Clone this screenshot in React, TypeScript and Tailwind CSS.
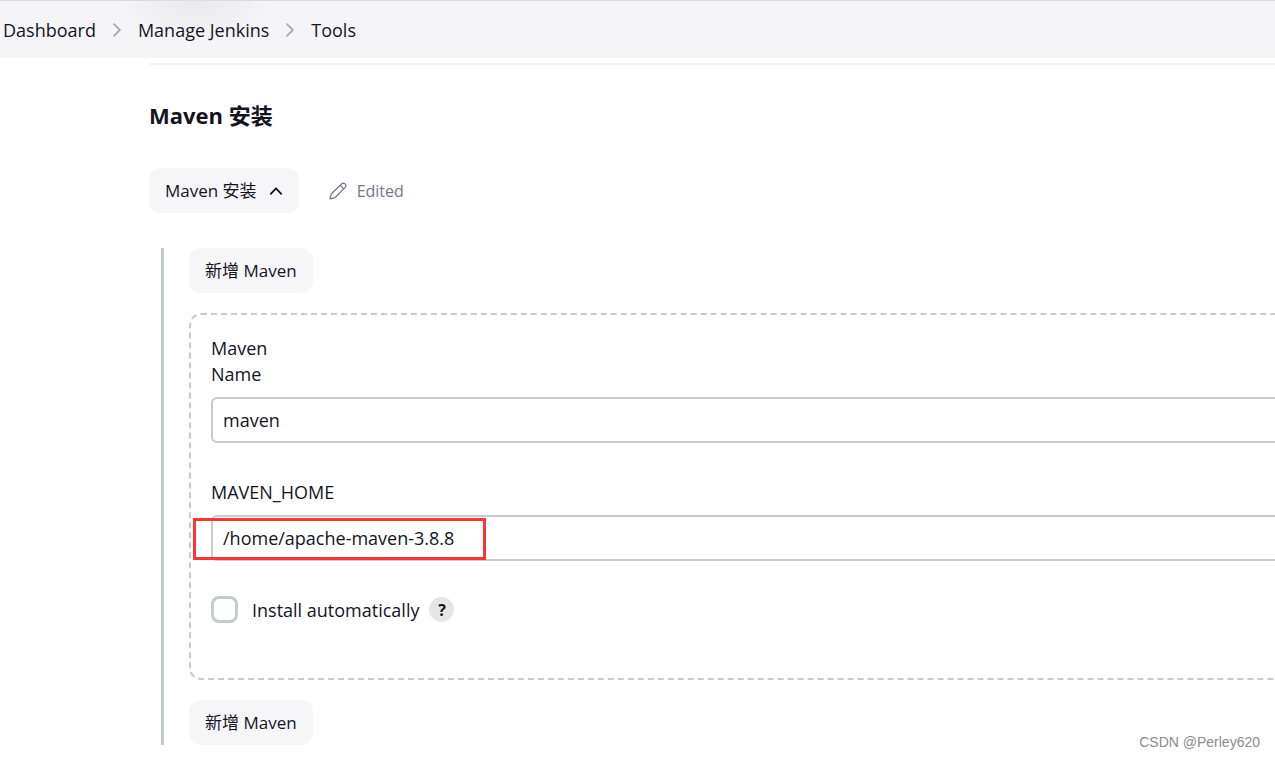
import { type ReactNode } from 'react'

/* ════════════════════════════════════════════════════════
   Icons
   ════════════════════════════════════════════════════ */
function ChevronRight() {
  return (
    <svg width="10" height="14" viewBox="0 0 10 14" fill="none" stroke="#a9a9bd" strokeWidth="1.8" strokeLinecap="round" strokeLinejoin="round" aria-hidden="true">
      <path d="M2 1.200 7.800 7 2 12.800" />
    </svg>
  )
}

function ChevronUp() {
  return (
    <svg width="14" height="10" viewBox="0 0 14 10" fill="none" stroke="#14141f" strokeWidth="1.8" strokeLinecap="round" strokeLinejoin="round" aria-hidden="true">
      <path d="M1.800 7.800 7 2.300l5.200 5.500" />
    </svg>
  )
}

function Pencil() {
  return (
    <svg width="18" height="18" viewBox="0 0 18 18" fill="none" stroke="#73738c" strokeWidth="1.2" strokeLinecap="round" strokeLinejoin="round" aria-hidden="true">
      <path d="M12.800 1.700 3 11.300Q2.100 12.200 1.800 13.500L1 17l3.500-.8q1.300-.3 2.200-1.200L16.300 5.200a2.500 2.500 0 0 0-3.500-3.500Z" />
      <path d="m11.200 3.300 3.500 3.500" />
    </svg>
  )
}

/* ════════════════════════════════════════════════════════
   Shared controls
   ════════════════════════════════════════════════════ */
const CRUMBS = ['Dashboard', 'Manage Jenkins', 'Tools']

function Button({ children }: { children: ReactNode }) {
  return (
    <button type="button" className="flex h-[45px] items-center gap-3 rounded-xl bg-[#f6f6f9] px-4 text-[17px] whitespace-nowrap">
      {children}
    </button>
  )
}

function TextInput({ id, value }: { id: string; value: string }) {
  return (
    <input
      id={id}
      type="text"
      defaultValue={value}
      className="mt-2.5 block h-[46px] w-full rounded-md border-2 border-[#c3ccd1] bg-white px-2.5 outline-none"
    />
  )
}

/* ════════════════════════════════════════════════════════
   Manage Jenkins / Tools
   ════════════════════════════════════════════════════ */
export default function App() {
  return (
    <div className="relative min-h-screen overflow-hidden bg-white font-['Open_Sans','Noto_Sans_CJK_SC',sans-serif] text-[18px] leading-[26px] text-[#14141f]">
      <header className="h-[58px] border-t border-[#dcdce0] bg-[#f5f5f8] bg-[radial-gradient(ellipse_75px_40px_at_195px_0px,#e9e9ec,transparent)]">
        <nav aria-label="Breadcrumb" className="h-full pl-[3px]">
          <ol className="flex h-full items-center gap-4">
            {CRUMBS.map((crumb, i) => (
              <li key={crumb} className="flex items-center gap-4">
                {i > 0 && <ChevronRight />}
                <a href="#">{crumb}</a>
              </li>
            ))}
          </ol>
        </nav>
      </header>

      <main className="pt-[5px] pl-[149px]">
        <hr className="border-t-2 border-[#f3f3f8]" />
        <h2 className="mt-[34px] text-[22px] leading-8 font-bold">Maven 安装</h2>

        <div className="mt-[37px] flex items-center gap-[30px]">
          <Button>
            Maven 安装
            <ChevronUp />
          </Button>
          <span className="flex items-center gap-2.5 text-base text-[#73738c]">
            <Pencil />
            Edited
          </span>
        </div>

        <section className="mt-[35px] ml-3 flex flex-col items-start gap-5 border-l-3 border-[#c3ccd1] pl-[25px]">
          <Button>新增 Maven</Button>

          {/* the panel runs on past the right edge of the window */}
          <div className="-mr-5 self-stretch rounded-xl border-2 border-dashed border-[#c3ccd1] px-5 pt-5 pb-[55px]">
            <p>Maven</p>
            <label htmlFor="name" className="block">Name</label>
            <div className="-mr-10">
              <TextInput id="name" value="maven" />
            </div>

            <label htmlFor="home" className="mt-9 block">MAVEN_HOME</label>
            <div className="relative -mr-10">
              <TextInput id="home" value="/home/apache-maven-3.8.8" />
              <div className="pointer-events-none absolute top-[3px] -left-[18px] h-[42px] w-[293px] border-3 border-[#fc3434]" />
            </div>

            <div className="mt-[35px] flex items-center">
              <input id="auto" type="checkbox" className="size-[27px] appearance-none rounded-lg border-3 border-[#c3ccd1] bg-white" />
              <label htmlFor="auto" className="ml-3.5">Install automatically</label>
              <button type="button" aria-label="Help" className="ml-2.5 flex size-[25px] items-center justify-center rounded-full bg-[#e6e6e6] text-base font-bold">
                ?
              </button>
            </div>
          </div>

          <Button>新增 Maven</Button>
        </section>
      </main>

      <div className="absolute right-[15px] bottom-2 font-['Liberation_Sans',sans-serif] text-sm leading-5 text-[#8c8c8c]">
        CSDN @Perley620
      </div>
    </div>
  )
}
